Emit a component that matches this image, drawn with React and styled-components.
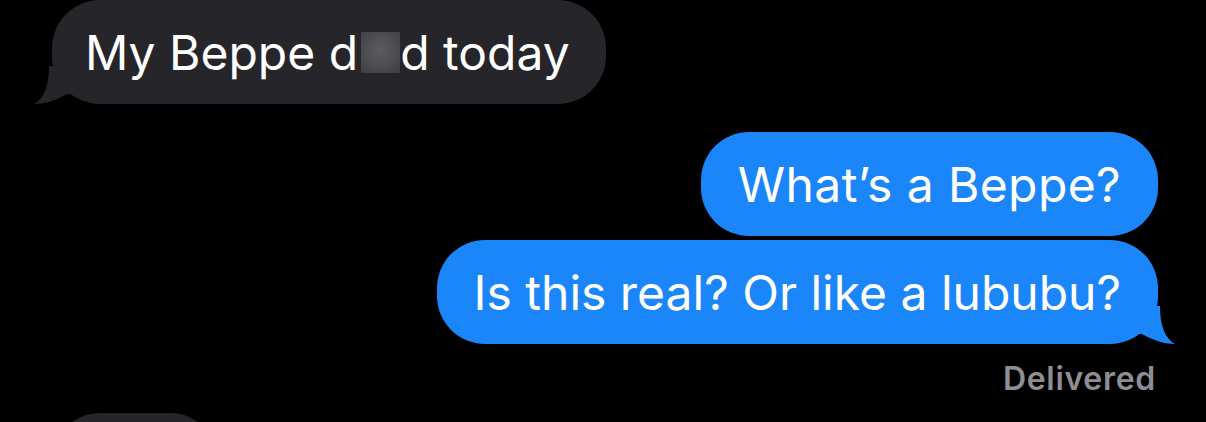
import React from 'react';
import styled, { createGlobalStyle } from 'styled-components';

const GlobalStyle = createGlobalStyle`
	html, body {
		margin: 0;
		padding: 0;
		background: #000;
	}
	body {
		width: 1206px;
		height: 422px;
		overflow: hidden;
		font-family: Inter, 'Liberation Sans', sans-serif;
		-webkit-font-smoothing: antialiased;
	}
`;

const COLORS = {
	incoming: '#262529',
	outgoing: '#1b86fa',
};

const App = () => {
	return (
		<>
			<GlobalStyle />
			<Thread>
				<Row $side='left'>
					<Bubble $side='left'>
						My Beppe d<Redacted aria-label='redacted' />d today
						<Tail side='left' />
					</Bubble>
				</Row>
				<Group>
					<Row $side='right'>
						<Bubble $side='right' $spacing='0.4px'>What’s a Beppe?</Bubble>
					</Row>
					<Row $side='right'>
						<Bubble $side='right'>
							Is this real? Or like a lububu?
							<Tail side='right' />
						</Bubble>
					</Row>
				</Group>
				<Status>Delivered</Status>
				<Row $side='left'>
					<NextBubble />
				</Row>
			</Thread>
		</>
	);
};

const Tail = ({ side }) => {
	const color = side === 'left' ? COLORS.incoming : COLORS.outgoing;
	return (
		<TailSvg $side={side} width='48' height='38' viewBox='0 0 48 38'>
			<path
				d='M0 0 L32 0 C32 18 36 32 47 38 C38 38 26 35 14 28 L0 28 Z'
				fill={color}
				transform={side === 'left' ? 'translate(48 0) scale(-1 1)' : undefined}
			/>
		</TailSvg>
	);
};

var Thread = styled.div`
	display: flex;
	flex-direction: column;
	padding: 0 48px 0 52px;
`;

var Row = styled.div`
	display: flex;
	justify-content: ${(p) => (p.$side === 'left' ? 'flex-start' : 'flex-end')};
`;

var Group = styled.div`
	display: flex;
	flex-direction: column;
	gap: 4px;
	margin-top: 28px;
`;

var Bubble = styled.div`
	position: relative;
	display: flex;
	align-items: center;
	height: 104px;
	padding: ${(p) => (p.$side === 'left' ? '0 36px 0 33px' : '0 37px')};
	border-radius: 48px;
	background: ${(p) => (p.$side === 'left' ? COLORS.incoming : COLORS.outgoing)};
	color: #fff;
	font-size: 48px;
	font-weight: 400;
	letter-spacing: ${(p) => p.$spacing || '0'};
	white-space: pre;
`;

var TailSvg = styled.svg`
	position: absolute;
	bottom: 0;
	${(p) => (p.$side === 'left' ? 'left: -19px;' : 'right: -18px;')}
	display: block;
`;

var Redacted = styled.span`
	display: inline-block;
	width: 39px;
	height: 41px;
	margin: 0 0 0 3px;
	background: radial-gradient(circle at 50% 45%, #5c5c60 0%, #4d4d51 55%, #3e3e42 100%);
	filter: blur(0.6px);
`;

var Status = styled.div`
	align-self: flex-end;
	margin-top: 19px;
	margin-right: 2px;
	color: #8e8e93;
	font-size: 32px;
	font-weight: 600;
	line-height: 32px;
	letter-spacing: 0.7px;
`;

var NextBubble = styled.div`
	width: 166px;
	height: 100px;
	margin-top: 18px;
	border-radius: 48px;
	background: ${COLORS.incoming};
`;

export default App;
